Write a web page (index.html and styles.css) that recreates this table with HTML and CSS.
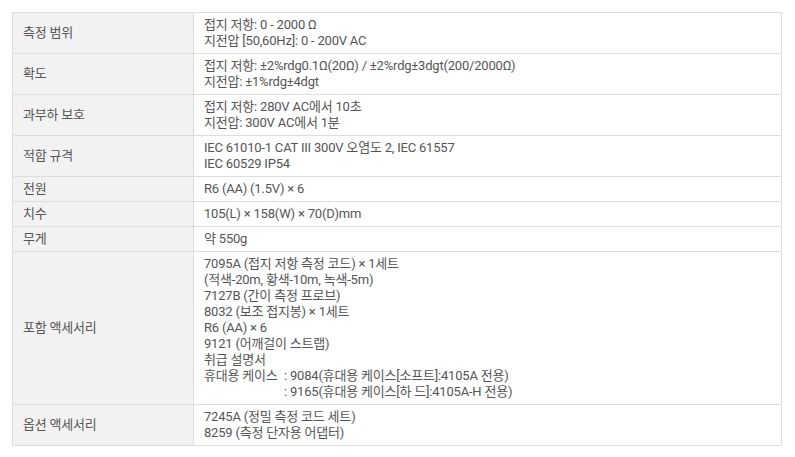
FILE: index.html
```html
<!DOCTYPE html>
<html lang="ko">
<head>
    <meta charset="UTF-8">
    <meta name="viewport" content="width=device-width, initial-scale=1.0">
    <title>사양</title>
    <link rel="stylesheet" href="styles.css">
</head>
<body>
    <table class="spec">
        <tr>
            <th>측정 범위</th>
            <td>접지 저항: 0 - 2000 Ω<br>지전압 [50,60Hz]: 0 - 200V AC</td>
        </tr>
        <tr>
            <th>확도</th>
            <td>접지 저항: ±2%rdg0.1Ω(20Ω) / ±2%rdg±3dgt(200/2000Ω)<br>지전압: ±1%rdg±4dgt</td>
        </tr>
        <tr>
            <th>과부하 보호</th>
            <td>접지 저항: 280V AC에서 10초<br>지전압: 300V AC에서 1분</td>
        </tr>
        <tr>
            <th>적합 규격</th>
            <td>IEC 61010-1 CAT III 300V 오염도 2, IEC 61557<br>IEC 60529 IP54</td>
        </tr>
        <tr>
            <th>전원</th>
            <td>R6 (AA) (1.5V) × 6</td>
        </tr>
        <tr>
            <th>치수</th>
            <td>105(L) × 158(W) × 70(D)mm</td>
        </tr>
        <tr>
            <th>무게</th>
            <td>약 550g</td>
        </tr>
        <tr>
            <th>포함 액세서리</th>
            <td>
                7095A (접지 저항 측정 코드) × 1세트<br>
                (적색-20m, 황색-10m, 녹색-5m)<br>
                7127B (간이 측정 프로브)<br>
                8032 (보조 접지봉) × 1세트<br>
                R6 (AA) × 6<br>
                9121 (어깨걸이 스트랩)<br>
                취급 설명서
                <div class="case-row">
                    <span class="case-name">휴대용 케이스</span>
                    <span class="case-list">: 9084(휴대용 케이스[소프트]:4105A 전용)<br>: 9165(휴대용 케이스[하 드]:4105A-H 전용)</span>
                </div>
            </td>
        </tr>
        <tr>
            <th>옵션 액세서리</th>
            <td>7245A (정밀 측정 코드 세트)<br>8259 (측정 단자용 어댑터)</td>
        </tr>
    </table>
</body>
</html>
```

FILE: styles.css
```css
body {
    margin: 0;
    padding: 12px;
    background-color: #fff;
    font-family: Roboto, "Noto Sans CJK KR", sans-serif;
    font-size: 13px;
    letter-spacing: -0.2px;
    color: #555;
}

.spec {
    width: 770px;
    border-collapse: collapse;
    border: 1px solid #ddd;
}

.spec th,
.spec td {
    border: 1px solid #ddd;
    padding: 4px 10px;
    line-height: 16px;
    text-align: left;
    font-weight: normal;
    vertical-align: middle;
}

.spec th {
    width: 160px;
    background-color: #f2f2f2;
}

.case-row {
    display: flex;
}

.case-name {
    width: 80px;
    flex-shrink: 0;
}
```
